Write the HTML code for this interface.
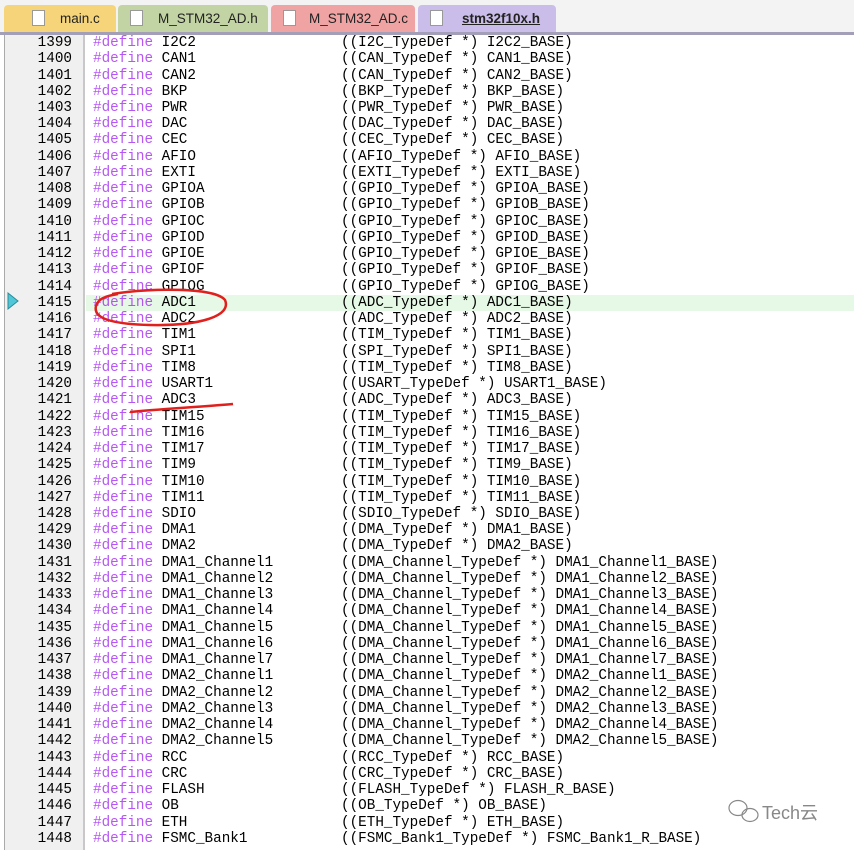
<!DOCTYPE html>
<html><head><meta charset="utf-8"><style>
body{margin:0;width:854px;height:850px;overflow:hidden;background:#fff;position:relative;font-family:"Liberation Mono",monospace}
.tabs{position:absolute;left:0;top:0;width:854px;height:32px;background:#f3f3f3;border-bottom:3px solid #a49fb8}
.tab{position:absolute;top:5px;height:27px;font:13.5px "Liberation Sans",sans-serif;line-height:28px;color:#222;border-radius:4px 4px 0 0;overflow:hidden}
.tab i{position:absolute;top:5px;width:11px;height:14px;background:#fff;border:1px solid #999}
.gut{position:absolute;left:4px;top:35px;width:78px;height:815px;background:#f0f0f0;border-left:1px solid #aaa;border-right:2px solid #c8c8c8}
.row{position:absolute;left:0;width:854px;height:16px;font-size:14.3px;line-height:17px;white-space:pre;color:#000}
.n{position:absolute;right:782px;width:60px;text-align:right}
.c{position:absolute;left:93px}
.c2{position:absolute;left:341px}
.k{color:#a020f0;opacity:.75}
.hl{background:#e6f9e6}
</style></head><body>
<div class="tabs">
<div class="tab" style="left:4px;width:112px;background:#f6d57a"><i style="left:28px"></i><span style="position:absolute;left:56px">main.c</span></div>
<div class="tab" style="left:118px;width:150px;background:#c3d4a4"><i style="left:12px"></i><span style="position:absolute;left:40px">M_STM32_AD.h</span></div>
<div class="tab" style="left:271px;width:144px;background:#f0a3a3"><i style="left:12px"></i><span style="position:absolute;left:38px">M_STM32_AD.c</span></div>
<div class="tab" style="left:418px;width:138px;background:#cbbde9"><i style="left:12px"></i><span style="position:absolute;left:44px;font-weight:bold;text-decoration:underline">stm32f10x.h</span></div>
</div>
<div class="gut"></div>
<div class="row hl" style="top:295px;left:86px;width:768px"></div>
<div id="code"></div>
<svg style="position:absolute;left:0;top:0" width="854" height="850">
<polygon points="8,293 18,301 8,309" fill="#4fc7d6" stroke="#2a8a9a"/>
<path d="M112,294 C150,288 215,287 225,300 C232,316 200,326 150,325 C110,324 93,318 96,306 C98,299 105,296 118,294" fill="none" stroke="#e0201c" stroke-width="2.5"/>
<path d="M130,412 C160,409 200,407 233,404" fill="none" stroke="#e0201c" stroke-width="2.5"/>
<g fill="none" stroke="#888" stroke-width="1.2"><ellipse cx="738" cy="808" rx="9" ry="7.5"/><ellipse cx="750" cy="815" rx="8" ry="6.5"/></g>
<text x="762" y="819" font-family="Liberation Sans, Noto Sans CJK SC, sans-serif" font-size="18" fill="#888">Tech云</text>
</svg>
<script>
const d=[["I2C2","((I2C_TypeDef *) I2C2_BASE)"],["CAN1","((CAN_TypeDef *) CAN1_BASE)"],["CAN2","((CAN_TypeDef *) CAN2_BASE)"],["BKP","((BKP_TypeDef *) BKP_BASE)"],["PWR","((PWR_TypeDef *) PWR_BASE)"],["DAC","((DAC_TypeDef *) DAC_BASE)"],["CEC","((CEC_TypeDef *) CEC_BASE)"],["AFIO","((AFIO_TypeDef *) AFIO_BASE)"],["EXTI","((EXTI_TypeDef *) EXTI_BASE)"],["GPIOA","((GPIO_TypeDef *) GPIOA_BASE)"],["GPIOB","((GPIO_TypeDef *) GPIOB_BASE)"],["GPIOC","((GPIO_TypeDef *) GPIOC_BASE)"],["GPIOD","((GPIO_TypeDef *) GPIOD_BASE)"],["GPIOE","((GPIO_TypeDef *) GPIOE_BASE)"],["GPIOF","((GPIO_TypeDef *) GPIOF_BASE)"],["GPIOG","((GPIO_TypeDef *) GPIOG_BASE)"],["ADC1","((ADC_TypeDef *) ADC1_BASE)"],["ADC2","((ADC_TypeDef *) ADC2_BASE)"],["TIM1","((TIM_TypeDef *) TIM1_BASE)"],["SPI1","((SPI_TypeDef *) SPI1_BASE)"],["TIM8","((TIM_TypeDef *) TIM8_BASE)"],["USART1","((USART_TypeDef *) USART1_BASE)"],["ADC3","((ADC_TypeDef *) ADC3_BASE)"],["TIM15","((TIM_TypeDef *) TIM15_BASE)"],["TIM16","((TIM_TypeDef *) TIM16_BASE)"],["TIM17","((TIM_TypeDef *) TIM17_BASE)"],["TIM9","((TIM_TypeDef *) TIM9_BASE)"],["TIM10","((TIM_TypeDef *) TIM10_BASE)"],["TIM11","((TIM_TypeDef *) TIM11_BASE)"],["SDIO","((SDIO_TypeDef *) SDIO_BASE)"],["DMA1","((DMA_TypeDef *) DMA1_BASE)"],["DMA2","((DMA_TypeDef *) DMA2_BASE)"]];
for(let i=1;i<=7;i++)d.push(["DMA1_Channel"+i,"((DMA_Channel_TypeDef *) DMA1_Channel"+i+"_BASE)"]);
for(let i=1;i<=5;i++)d.push(["DMA2_Channel"+i,"((DMA_Channel_TypeDef *) DMA2_Channel"+i+"_BASE)"]);
d.push(["RCC","((RCC_TypeDef *) RCC_BASE)"],["CRC","((CRC_TypeDef *) CRC_BASE)"],["FLASH","((FLASH_TypeDef *) FLASH_R_BASE)"],["OB","((OB_TypeDef *) OB_BASE)"],["ETH","((ETH_TypeDef *) ETH_BASE)"],["FSMC_Bank1","((FSMC_Bank1_TypeDef *) FSMC_Bank1_R_BASE)"]);
let h="";d.forEach((r,i)=>{h+=`<div class="row" style="top:${(35+i*16.24).toFixed(1)}px"><span class="n">${1399+i}</span><span class="c"><span class="k">#define</span> ${r[0]}</span><span class="c2">${r[1]}</span></div>`});
document.getElementById("code").innerHTML=h;
</script>
</body></html>
